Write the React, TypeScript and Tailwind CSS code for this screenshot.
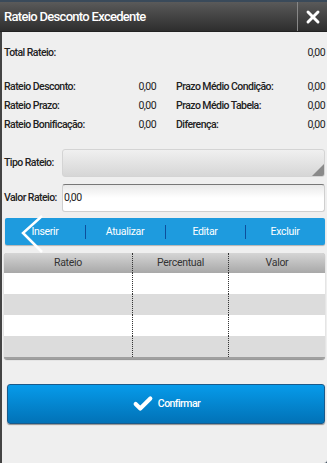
import { Check, X } from 'lucide-react';

const rows = [
  ['Rateio Desconto:', '0,00', 'Prazo Médio Condição:', '0,00'],
  ['Rateio Prazo:', '0,00', 'Prazo Médio Tabela:', '0,00'],
  ['Rateio Bonificação:', '0,00', 'Diferença:', '0,00'],
];

export default function App() {
  return (
    <div className="w-[327px] h-[463px] bg-[#3a4a5a] pt-[2px] font-['Roboto',sans-serif] overflow-hidden">
      {/* barra de título */}
      <div className="h-[30px] flex bg-gradient-to-b from-[#5a5a5a] to-[#2e2e2e] border-b border-[#222]">
        <div className="flex-1 flex items-center pl-[4px] text-white text-[13px] font-medium tracking-[-0.7px]">
          Rateio Desconto Excedente
        </div>
        <div className="w-[30px] flex items-center justify-center border-l border-[#888]">
          <X size={20} strokeWidth={3.5} className="text-white" />
        </div>
      </div>

      <div className="relative h-[431px] bg-[#efefef] border-l-2 border-[#444] rounded-br-[3px] text-[#222] text-[10.5px] font-medium tracking-[-0.55px]">
        <div className="flex justify-between pl-[2px] pr-[2px] pt-[13px] h-[44px]">
          <span>Total Rateio:</span>
          <span className="font-normal">0,00</span>
        </div>

        <div className="flex flex-col gap-[5px] pl-[2px] pr-[2px] pt-[4px]">
          {rows.map((r) => (
            <div key={r[0]} className="h-[14px] flex items-center">
              <span className="w-[112px]">{r[0]}</span>
              <span className="w-[40px] text-right font-normal">{r[1]}</span>
              <span className="ml-[20px] flex-1">{r[2]}</span>
              <span className="font-normal">{r[3]}</span>
            </div>
          ))}
        </div>

        {/* campos */}
        <div className="flex items-center h-[30px] mt-[16px] pl-[2px] pr-[2px]">
          <span className="w-[58px] whitespace-nowrap">Tipo Rateio:</span>
          <div className="relative flex-1 h-[28px] rounded-[3px] border border-[#d4d4d4] bg-gradient-to-b from-[#f0f0f0] to-[#d6d6d6] overflow-hidden">
            <div className="absolute right-0 bottom-0 w-0 h-0 border-l-[12px] border-l-transparent border-b-[12px] border-b-[#8a8a8a]" />
          </div>
        </div>
        <div className="flex items-center h-[30px] mt-[5px] pl-[2px] pr-[2px]">
          <span className="w-[58px] whitespace-nowrap">Valor Rateio:</span>
          <div className="flex-1 h-[28px] rounded-[3px] border border-[#cfcfcf] border-t-[#777] bg-gradient-to-b from-[#e9e9e9] via-white to-white flex items-center pl-[1px] font-normal">
            0,00
          </div>
        </div>

        {/* barra de ações */}
        <div className="flex items-center h-[27px] mt-[5px] ml-[3px] mr-[2px] rounded-[2px] bg-[#1e9bde] text-white font-normal tracking-[-0.3px] shadow-[0_1px_1px_rgba(0,0,0,0.25)]">
          {['Inserir', 'Atualizar', 'Editar', 'Excluir'].map((t, i) => (
            <div key={t} className="flex-1 flex items-center justify-center h-full relative">
              {i > 0 && <div className="absolute left-0 top-[7px] h-[14px] w-[1px] bg-[#0d4f9c]" />}
              {t}
            </div>
          ))}
        </div>

        {/* tabela */}
        <div className="mt-[8px] ml-[2px] mr-[2px] rounded-[3px] overflow-hidden bg-[#bbb] shadow-[0_1px_1px_rgba(0,0,0,0.4)]">
          <div className="flex h-[20px] bg-gradient-to-b from-[#d5d5d5] to-[#a8a8a8] text-[#333] font-normal tracking-[-0.3px]">
            <div className="w-[129px] flex items-center justify-center border-r border-dotted border-[#333]">Rateio</div>
            <div className="w-[96px] flex items-center justify-center border-r border-dotted border-[#333]">Percentual</div>
            <div className="flex-1 flex items-center justify-center">Valor</div>
          </div>
          {[0, 1, 2, 3].map((i) => (
            <div key={i} className={`flex h-[21px] ${i % 2 ? 'bg-[#dcdcdc]' : 'bg-white'}`}>
              <div className="w-[129px] border-r border-dotted border-[#333]" />
              <div className="w-[96px] border-r border-dotted border-[#333]" />
              <div className="flex-1" />
            </div>
          ))}
          <div className="h-[2px] bg-[#a0a0a0]" />
        </div>

        {/* confirmar */}
        <div className="mt-[25px] ml-[5px] mr-[2px]">
          <button className="w-full h-[40px] rounded-[3px] bg-gradient-to-b from-[#079bea] to-[#0272b7] border border-[#1a5a8a] flex items-center justify-center gap-[4px] text-white shadow-[0_1px_1px_rgba(0,0,0,0.4)]">
            <Check size={22} strokeWidth={4.5} />
            Confirmar
          </button>
        </div>

        {/* seta de voltar sobreposta */}
        <svg className="absolute left-[18px] top-[183px]" width="26" height="38" viewBox="0 0 26 38">
          <path d="M22 1 L3 18 L22 37" fill="none" stroke="white" strokeWidth="2.5" />
        </svg>
      </div>
    </div>
  );
}
